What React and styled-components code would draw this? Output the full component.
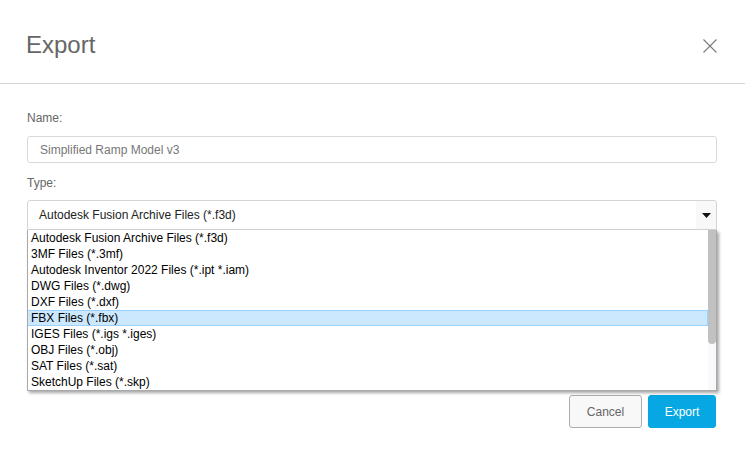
import React from "react";
import styled, { createGlobalStyle } from "styled-components";

const fileTypes = [
  "Autodesk Fusion Archive Files (*.f3d)",
  "3MF Files (*.3mf)",
  "Autodesk Inventor 2022 Files (*.ipt *.iam)",
  "DWG Files (*.dwg)",
  "DXF Files (*.dxf)",
  "FBX Files (*.fbx)",
  "IGES Files (*.igs *.iges)",
  "OBJ Files (*.obj)",
  "SAT Files (*.sat)",
  "SketchUp Files (*.skp)",
];

function App() {
  const selected = "Autodesk Fusion Archive Files (*.f3d)";
  const hovered = "FBX Files (*.fbx)";

  return (
    <>
      <GlobalStyle />
      <Dialog>
        <Header>
          <Title>Export</Title>
          <CloseButton aria-label="Close">
            <svg width="14" height="14" viewBox="0 0 14 14">
              <path d="M0.5 0.5 L13.5 13.5 M13.5 0.5 L0.5 13.5" stroke="#7a7a7a" strokeWidth="1.1" fill="none" />
            </svg>
          </CloseButton>
        </Header>

        <Body>
          <Label>Name:</Label>
          <TextInput>Simplified Ramp Model v3</TextInput>

          <Label $top={13}>Type:</Label>
          <SelectWrap>
            <SelectBox>
              <span>{selected}</span>
              <Arrow>
                <svg width="9" height="5" viewBox="0 0 9 5">
                  <path d="M0 0 H9 L4.5 5 Z" fill="#111" />
                </svg>
              </Arrow>
            </SelectBox>

            <DropList>
              <Options>
                {fileTypes.map((t) => (
                  <Option key={t} $active={t === hovered}>
                    {t}
                  </Option>
                ))}
              </Options>
              <ScrollTrack>
                <ScrollThumb />
              </ScrollTrack>
            </DropList>
          </SelectWrap>

          <Footer>
            <Button>Cancel</Button>
            <Button $primary>Export</Button>
          </Footer>
        </Body>
      </Dialog>
    </>
  );
}

////////////////////////////////////////////Styled-Components
const GlobalStyle = createGlobalStyle`
  body {
    margin: 0;
    background: #fff;
    font-family: "Liberation Sans", Arial, sans-serif;
  }
`;

const Dialog = styled.div`
  width: 745px;
  height: 462px;
  background: #fff;
  overflow: hidden;
`;

const Header = styled.div`
  box-sizing: border-box;
  height: 84px;
  padding: 33px 28px 0 26px;
  display: flex;
  justify-content: space-between;
  align-items: flex-start;
  border-bottom: 1px solid #d6d6d6;
`;

const Title = styled.h1`
  margin: 0;
  font-size: 24px;
  line-height: 24px;
  font-weight: normal;
  color: #666;
`;

const CloseButton = styled.button`
  margin-top: 6px;
  padding: 0;
  border: none;
  background: none;
  width: 14px;
  height: 14px;
  display: flex;
`;

const Body = styled.div`
  padding: 27px 28px 0 27px;
`;

const Label = styled.div`
  margin-top: ${(p) => p.$top || 0}px;
  font-size: 12px;
  line-height: 14px;
  color: #666;
`;

const TextInput = styled.div`
  box-sizing: border-box;
  margin-top: 11px;
  height: 27px;
  padding: 1px 12px 0;
  display: flex;
  align-items: center;
  border: 1px solid #d9d9d9;
  border-radius: 3px;
  font-size: 12px;
  color: #777;
`;

const SelectWrap = styled.div`
  position: relative;
  margin-top: 10px;
`;

const SelectBox = styled.div`
  box-sizing: border-box;
  height: 30px;
  display: flex;
  align-items: center;
  justify-content: space-between;
  border: 1px solid #d4d4d4;
  border-radius: 3px 3px 0 0;
  font-size: 12px;
  color: #222;

  span {
    padding-left: 11px;
  }
`;

const Arrow = styled.div`
  width: 20px;
  height: 100%;
  display: flex;
  align-items: center;
  justify-content: center;
  background: #f8f8f8;
  border-radius: 0 3px 0 0;
`;

const DropList = styled.div`
  position: absolute;
  top: 30px;
  left: 0;
  right: 0;
  height: 160px;
  display: flex;
  background: #fff;
  border: 1px solid #a8a8a8;
  border-top: none;
  box-shadow: 2px 2px 3px rgba(0, 0, 0, 0.35);
`;

const Options = styled.div`
  flex: 1;
`;

const Option = styled.div`
  box-sizing: border-box;
  height: 16px;
  padding-left: 3px;
  font-size: 12px;
  line-height: 14px;
  color: #000;
  background: ${(p) => (p.$active ? "#cce8ff" : "transparent")};
  border: 1px solid ${(p) => (p.$active ? "#99d1ff" : "transparent")};
  border-left: none;
`;

const ScrollTrack = styled.div`
  width: 8px;
  background: #f9f9fb;
`;

const ScrollThumb = styled.div`
  height: 114px;
  background: #c1c1c1;
  border-radius: 0 0 4px 4px;
`;

const Footer = styled.div`
  margin-top: 165px;
  display: flex;
  justify-content: flex-end;
  gap: 6px;
  padding-right: 1px;
`;

const Button = styled.button`
  box-sizing: border-box;
  height: 33px;
  width: ${(p) => (p.$primary ? 68 : 73)}px;
  border-radius: 3px;
  font-family: "Liberation Sans", Arial, sans-serif;
  font-size: 12px;
  color: ${(p) => (p.$primary ? "#fff" : "#666")};
  background: ${(p) => (p.$primary ? "#06a7e2" : "#f8f8f8")};
  border: 1px solid ${(p) => (p.$primary ? "#06a7e2" : "#adadad")};
`;

export default App;
